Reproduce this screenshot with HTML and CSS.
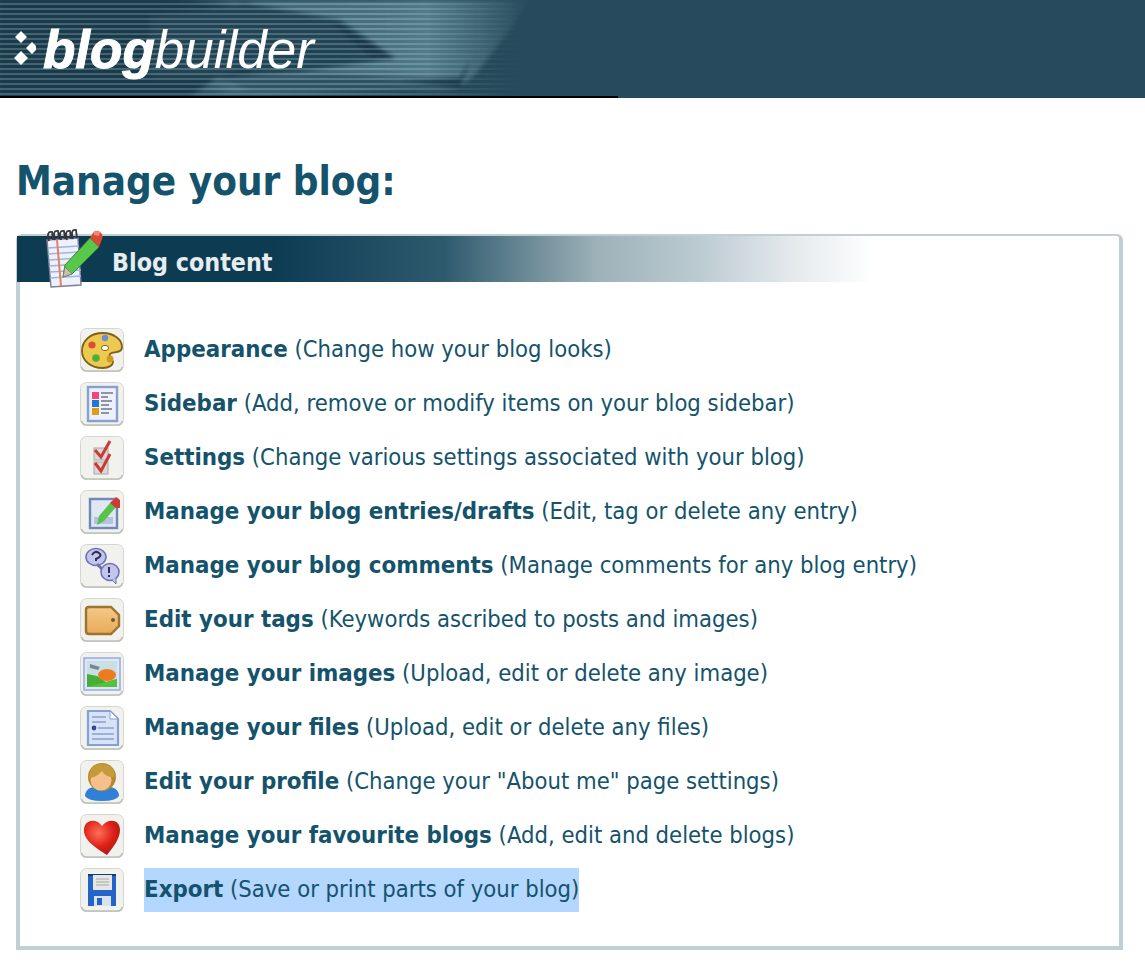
FILE: index.html
```html
<!DOCTYPE html>
<html lang="en">
<head>
<meta charset="utf-8">
<title>Manage your blog</title>
<link rel="stylesheet" href="styles.css">
</head>
<body>
<svg class="defs" width="0" height="0" aria-hidden="true">
  <defs>
    <symbol id="tile" viewBox="0 0 44 44">
      <rect x="0.5" y="0.5" width="43" height="43" rx="6" fill="#f1f1ee" stroke="#d4d7cf"/>
      <path d="M1.5 39q1 4 5 4h31q4 0 5-4" fill="none" stroke="#bcc1b6" stroke-width="1.6"/>
    </symbol>
  </defs>
</svg>
<header class="banner">
  <svg class="banner-art" viewBox="0 0 620 98" width="620" height="98" aria-hidden="true">
    <defs>
      <linearGradient id="fade" x1="0" x2="1" y1="0" y2="0">
        <stop offset="0" stop-color="#5d8494" stop-opacity="0"/>
        <stop offset="0.2" stop-color="#5d8494" stop-opacity="0.8"/>
        <stop offset="0.72" stop-color="#5f8896"/>
        <stop offset="1" stop-color="#274b5c"/>
      </linearGradient>
    </defs>
    <rect x="0" y="0" width="250" height="96" fill="#1f3f50"/>
    <rect x="250" y="0" width="80" height="96" fill="#274b5c"/>
    <path d="M160 0H530L510 30L475 75L455 90L190 96L216 78L300 72L395 58L340 20L240 5Z" fill="url(#fade)"/>
    <path d="M200 10L245 3L340 20L395 58L370 60L330 45L300 50L216 78L150 78V15Z" fill="#2a4b5b"/>
    <path d="M330 20L395 58L372 58L345 35Z" fill="#1e3d4c"/>
    <path d="M216 78L330 74L440 80L461 88L440 92L250 90Z" fill="#3a5e6e"/>
    <path d="M400 80L460 78L470 60L460 88Z" fill="#1e3d4c"/>
  </svg>
  <div class="banner-stripes"></div>
  <div class="logo">
    <svg class="logo-mark" viewBox="0 0 24 40" width="24" height="40" aria-hidden="true">
      <path d="M9 2l6 6-6 6-6-6zM20 13l6 6-6 6-6-6zM9 22l7 7-7 7-7-7z" fill="#fff"/>
    </svg>
    <span class="logo-text"><b>blog</b>builder</span>
  </div>
  <div class="banner-rule"></div>
</header>
<main class="page">
  <h1>Manage your blog:</h1>
  <section class="panel">
    <h2 class="panel-title">
      <svg class="panel-icon" viewBox="0 0 58 62" width="58" height="62" aria-hidden="true">
        <path d="M2 13L33 11L36 58L6 60Z" fill="#eef1fb" stroke="#7f7f8f" stroke-width="1.4"/>
        <path d="M3 21l31-2M3 27l31-2M4 33l31-2M4 39l31-2M5 45l31-2M5 51l31-2" stroke="#9db4e6" stroke-width="1.3"/>
        <path d="M12 13L16 59" stroke="#e58058" stroke-width="2"/>
        <path d="M4 14q-3-10 3-9l1 8M10 13q-3-10 3-9l1 8M16 13q-3-10 3-9l1 8M22 13q-3-10 3-9l1 8M28 12q-3-10 3-9l1 8" fill="none" stroke="#35353c" stroke-width="1.8"/>
        <path d="M45 11L54 20L27 47L18 50L20 38Z" fill="#58c84a" stroke="#3f7f3b"/>
        <path d="M18 50L20 40L27 47Z" fill="#c8c0ae" stroke="#6f6a60" stroke-width="0.6"/>
        <path d="M45 11l3-5q3-4 7-1t2 7l-3 8Z" fill="#d84a34"/>
        <path d="M49 5q3-2 6 0l-1 4-5-1Z" fill="#ee8b72"/>
      </svg>
      Blog content
    </h2>
    <ul class="menu">
      <li class="item">
        <svg class="tile" viewBox="0 0 44 44" aria-hidden="true"><use href="#tile"/>
          <path d="M23 5C10 5 2 13 2 23c0 10 9 17 21 17 6 0 10-3 10-6 0-4-5-4-3-8 2-3 12 0 12-7C42 11 33 5 23 5Z" fill="#ecc94f" stroke="#7f5f1c" stroke-width="1.8"/>
          <circle cx="25" cy="10" r="3.2" fill="#6f8cd8"/><circle cx="12" cy="17" r="3.600" fill="#dd4a35"/><circle cx="16" cy="30" r="3.800" fill="#4fae3a"/><ellipse cx="25" cy="20" rx="3.600" ry="2.600" fill="#fff" stroke="#86651f"/><circle cx="30" cy="31" r="3.400" fill="#cf9a1e"/>
        </svg>
        <a class="link" href="#"><strong>Appearance</strong> (Change how your blog looks)</a>
      </li>
      <li class="item">
        <svg class="tile" viewBox="0 0 44 44" aria-hidden="true"><use href="#tile"/>
          <rect x="8" y="5" width="29" height="34" fill="#edf1fb" stroke="#86a0d0" stroke-width="2.4"/>
          <rect x="12" y="10" width="7" height="7" fill="#f0467c"/><rect x="12" y="18" width="7" height="7" fill="#2277d6"/><rect x="12" y="26" width="7" height="7" fill="#dd9d16"/>
          <path d="M21 11h12M21 15h7M21 19h11M21 23h8M21 27h11M21 31h8" stroke="#6f7686" stroke-width="1.500"/>
        </svg>
        <a class="link" href="#"><strong>Sidebar</strong> (Add, remove or modify items on your blog sidebar)</a>
      </li>
      <li class="item">
        <svg class="tile" viewBox="0 0 44 44" aria-hidden="true"><use href="#tile"/>
          <rect x="14" y="12" width="14" height="12" fill="#d8d8d8" stroke="#a8a8a8"/><rect x="14" y="26" width="14" height="12" fill="#d8d8d8" stroke="#a8a8a8"/>
          <path d="M15 14l6 7 9-16M15 27l6 8 9-17" fill="none" stroke="#cb3a30" stroke-width="3"/>
        </svg>
        <a class="link" href="#"><strong>Settings</strong> (Change various settings associated with your blog)</a>
      </li>
      <li class="item">
        <svg class="tile" viewBox="0 0 44 44" aria-hidden="true"><use href="#tile"/>
          <rect x="10" y="9" width="27" height="29" fill="#dfe6f4" stroke="#6f88b4" stroke-width="2.400"/>
          <rect x="14" y="27" width="19" height="7" fill="#b5c3da"/>
          <path d="M31 12l5 5-12 14-7 4 2-9Z" fill="#58c24a"/><path d="M30 13l6-6 4 3v8l-4 0Z" fill="#cf3a32"/>
        </svg>
        <a class="link" href="#"><strong>Manage your blog entries/drafts</strong> (Edit, tag or delete any entry)</a>
      </li>
      <li class="item">
        <svg class="tile" viewBox="0 0 44 44" aria-hidden="true"><use href="#tile"/>
          <ellipse cx="16" cy="13" rx="10" ry="8.500" fill="#c3c6ec" stroke="#6f73b4" stroke-width="1.600"/>
          <path d="M17 20l9 9" stroke="#6f73b4" stroke-width="3"/>
          <ellipse cx="30" cy="28" rx="9" ry="8.500" fill="#c3c6ec" stroke="#6f73b4" stroke-width="1.600"/>
          <path d="M32 36l4 4 0-6" fill="#c3c6ec" stroke="#6f73b4"/>
          <path d="M12 11q3-5 7-2t-3 6v2M29 23v6M29 31v2" fill="none" stroke="#2e2e58" stroke-width="2"/>
        </svg>
        <a class="link" href="#"><strong>Manage your blog comments</strong> (Manage comments for any blog entry)</a>
      </li>
      <li class="item">
        <svg class="tile" viewBox="0 0 44 44" aria-hidden="true"><use href="#tile"/>
          <defs><linearGradient id="tagfill" x1="0" x2="0" y1="0" y2="1"><stop offset="0" stop-color="#f4c98a"/><stop offset="1" stop-color="#e7ab57"/></linearGradient></defs>
          <path d="M9 9H31L39 17V28L31 36H9Q6 36 6 33V12Q6 9 9 9Z" fill="url(#tagfill)" stroke="#9c7330" stroke-width="2.400"/>
          <circle cx="33" cy="22" r="2" fill="#6d5a3a"/>
        </svg>
        <a class="link" href="#"><strong>Edit your tags</strong> (Keywords ascribed to posts and images)</a>
      </li>
      <li class="item">
        <svg class="tile" viewBox="0 0 44 44" aria-hidden="true"><use href="#tile"/>
          <rect x="4" y="6" width="36" height="32" fill="#dfe5fa" stroke="#a4b5e2" stroke-width="1.800"/>
          <rect x="7" y="9" width="30" height="26" fill="#c8dfe6"/>
          <path d="M7 22l10 2 9 6 11-3v8H7Z" fill="#46ad36"/><ellipse cx="27" cy="23" rx="9" ry="6" fill="#ee7c1e"/>
          <path d="M7 35l30-8v8Z" fill="#57c13c"/><path d="M10 12l10 3-2 3-8-2Z" fill="#7a8791"/>
        </svg>
        <a class="link" href="#"><strong>Manage your images</strong> (Upload, edit or delete any image)</a>
      </li>
      <li class="item">
        <svg class="tile" viewBox="0 0 44 44" aria-hidden="true"><use href="#tile"/>
          <path d="M8 5H30L38 13V39H8Z" fill="#d9e3f7" stroke="#86a0d2" stroke-width="2.200"/>
          <path d="M30 5V13H38Z" fill="#fff" stroke="#86a0d2"/>
          <path d="M12 11h14M12 16h14M18 22h16M12 28h22M12 33h22" stroke="#86a0d2" stroke-width="1.500"/>
          <circle cx="14" cy="22" r="2.400" fill="#33459a"/>
        </svg>
        <a class="link" href="#"><strong>Manage your files</strong> (Upload, edit or delete any files)</a>
      </li>
      <li class="item">
        <svg class="tile" viewBox="0 0 44 44" aria-hidden="true"><use href="#tile"/>
          <path d="M5 36q0-10 17-10t17 10q-3 5-17 5T5 36Z" fill="#2f80d6"/>
          <circle cx="22" cy="17" r="14" fill="#b58a2c"/>
          <circle cx="21" cy="20" r="10.500" fill="#f6c08a"/>
          <path d="M9 18q7 0 13-7 4 7 13 6-1-13-13-13T9 18Z" fill="#c59a3a"/>
        </svg>
        <a class="link" href="#"><strong>Edit your profile</strong> (Change your "About me" page settings)</a>
      </li>
      <li class="item">
        <svg class="tile" viewBox="0 0 44 44" aria-hidden="true"><use href="#tile"/>
          <defs><radialGradient id="heart" cx="0.4" cy="0.35" r="0.7"><stop offset="0" stop-color="#ff7058"/><stop offset="0.6" stop-color="#df1f17"/><stop offset="1" stop-color="#a31a18"/></radialGradient></defs>
          <path d="M27 41C16 34 3 26 4 15 5 5 17 4 22 12 28 4 40 5 40 16 40 25 33 33 27 41Z" fill="url(#heart)"/>
        </svg>
        <a class="link" href="#"><strong>Manage your favourite blogs</strong> (Add, edit and delete blogs)</a>
      </li>
      <li class="item">
        <svg class="tile" viewBox="0 0 44 44" aria-hidden="true"><use href="#tile"/>
          <path d="M8 7H36V38H8Z" fill="#2463c8"/>
          <path d="M8 7H36" stroke="#16397e" stroke-width="2"/>
          <rect x="13" y="7" width="19" height="15" fill="#e6e6e2"/>
          <path d="M16 11h13M16 14h13M16 17h13" stroke="#a9a9a4" stroke-width="1.200"/>
          <rect x="14" y="28" width="17" height="10" fill="#d9e2ef"/><rect x="17" y="30" width="5" height="7" fill="#2463c8"/>
        </svg>
        <a class="link link-selected" href="#"><strong>Export</strong> (Save or print parts of your blog)</a>
      </li>
    </ul>
  </section>
</main>
</body>
</html>
```
FILE: styles.css
```css
html, body {
  margin: 0;
  padding: 0;
  background: #fff;
}
body {
  font-family: "DejaVu Sans Condensed", "DejaVu Sans", Verdana, sans-serif;
  font-stretch: condensed;
  color: #14536b;
}
.defs {
  position: absolute;
}
.banner {
  position: relative;
  height: 98px;
  background: #274b5c;
  overflow: hidden;
}
.banner-art {
  position: absolute;
  left: 0;
  top: 0;
  filter: blur(2px);
}
.banner-stripes {
  position: absolute;
  left: 0;
  top: 0;
  width: 620px;
  height: 96px;
  background: repeating-linear-gradient(180deg, rgba(10, 40, 55, 0.22) 0 3px, rgba(150, 185, 195, 0.3) 3px 5px);
  -webkit-mask-image: linear-gradient(90deg, #000 0, #000 60%, transparent 84%);
  mask-image: linear-gradient(90deg, #000 0, #000 60%, transparent 84%);
}
.banner-rule {
  position: absolute;
  left: 0;
  bottom: 0;
  width: 618px;
  height: 2px;
  background: #000;
}
.logo {
  position: absolute;
  left: 12px;
  top: 24px;
  display: flex;
  align-items: center;
  gap: 7px;
  color: #fff;
}
.logo-mark {
  margin-top: -2px;
}
.logo-text {
  font-family: "Liberation Sans", Arial, sans-serif;
  font-stretch: normal;
  font-size: 53px;
  line-height: 52px;
  font-style: italic;
}
.logo-text b {
  font-weight: 700;
  -webkit-text-stroke: 1px #fff;
}
.page {
  padding: 0 22px 0 16px;
}
h1 {
  margin: 0;
  padding: 60px 0 30px;
  font-size: 40px;
  line-height: 46px;
  font-weight: 700;
  color: #14536b;
}
.panel {
  position: relative;
  height: 716px;
  box-sizing: border-box;
  border: 4px solid #bfcfd3;
  border-top-width: 2px;
  border-radius: 6px 6px 0 0;
}
.panel-title {
  position: relative;
  margin: 0 0 0 -3px;
  width: 853px;
  height: 46px;
  box-sizing: border-box;
  padding-left: 95px;
  font-size: 24.8px;
  line-height: 54px;
  font-weight: 700;
  color: #e6edf0;
  background: linear-gradient(90deg, #0d3b52 0, #0d3b52 30%, #2e5a6e 50%, #9db1b8 68%, #bccbd2 80%, #e8ecef 92%, #fdfefe 100%);
}
.panel-icon {
  position: absolute;
  left: 28px;
  top: -9px;
  filter: blur(0.4px);
}
.menu {
  list-style: none;
  margin: 0;
  padding: 46px 0 0 60px;
  display: flex;
  flex-direction: column;
  gap: 10px;
}
.item {
  display: flex;
  align-items: center;
  gap: 20px;
  height: 44px;
}
.tile {
  width: 44px;
  height: 44px;
  flex: none;
  filter: blur(0.4px);
}
.link {
  display: block;
  height: 44px;
  line-height: 42px;
  font-size: 23.6px;
  color: #14536b;
  text-decoration: none;
  white-space: nowrap;
}
.link strong {
  font-size: 23.8px;
}
.link-selected {
  background: #b3d7ff;
}
```
